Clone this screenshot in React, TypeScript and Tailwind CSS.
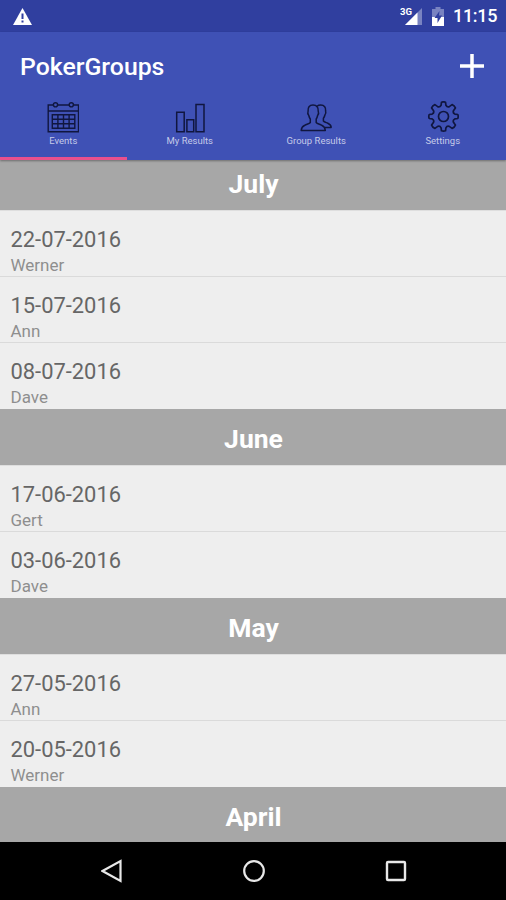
import type { ReactNode } from "react";

interface PokerEvent {
  date: string;
  host: string;
}

interface Month {
  name: string;
  events: PokerEvent[];
}

const months: Month[] = [
  {
    name: "July",
    events: [
      { date: "22-07-2016", host: "Werner" },
      { date: "15-07-2016", host: "Ann" },
      { date: "08-07-2016", host: "Dave" },
    ],
  },
  {
    name: "June",
    events: [
      { date: "17-06-2016", host: "Gert" },
      { date: "03-06-2016", host: "Dave" },
    ],
  },
  {
    name: "May",
    events: [
      { date: "27-05-2016", host: "Ann" },
      { date: "20-05-2016", host: "Werner" },
    ],
  },
  { name: "April", events: [] },
];

const CalendarIcon = () => (
  <svg className="h-8 w-8" viewBox="0 0 32 32" fill="none" stroke="#10163f" strokeWidth="1.4">
    <path d="M6.5 4H1.2V30.8H31.5V4H26.5M10.5 4H22M1.2 10H31.5" />
    <circle cx="8.5" cy="3.8" r="2.1" />
    <circle cx="24.3" cy="3.8" r="2.1" />
    <path d="M5.3 13.8H27.8V27.3H5.3ZM5.3 18.3H27.8M5.3 22.8H27.8M10.9 13.8V27.3M16.5 13.8V27.3M22.1 13.8V27.3" />
  </svg>
);

const BarsIcon = () => (
  <svg className="h-8 w-8" viewBox="0 0 32 32" fill="none" stroke="#10163f" strokeWidth="1.5">
    <path d="M2.7 11.2H10.2V30.8H2.7ZM12.9 18.7H19.7V30.8H12.9ZM22 3.4H30V30.8H22Z" />
  </svg>
);

const GroupIcon = () => (
  <svg className="h-8 w-8" viewBox="0 0 32 32" fill="none" stroke="#10163f" strokeWidth="1.5" strokeLinejoin="round">
    <path d="M13 4C9.2 4 7.8 6.5 8.1 10C7.6 11.5 7.8 13.5 8.8 14.5C9.1 16 9.6 17.2 10.3 18V21.5C9.5 22.6 7 23.2 4.8 24.3C2.5 25.3 1.4 26.6 1.2 29.5H25.3C25.1 26.6 24 25.3 21.7 24.3C19.5 23.2 17 22.6 16.2 21.5V18C16.9 17.2 17.3 16 17.6 14.5C18.5 13.5 18.8 11.5 18.2 10C18.5 6.5 16.8 4 13 4Z" />
    <path d="M17 5.3C18 4.4 19 4 20.7 4C24.4 4 26 6.5 25.6 10C26.1 11.5 25.8 13 24.9 14C24.6 15.5 24.1 16.4 23.4 17.2V20C24.2 21 26 21.4 27.8 22.2C30 23.2 31.1 24.4 31.2 26.4H25" />
  </svg>
);

const GearIcon = () => (
  <svg className="h-8 w-8" viewBox="0 0 32 32" fill="none" stroke="#10163f" strokeWidth="1.7" strokeLinejoin="round">
    <path d="M14.5 1.2Q16.5 .4 18.5 1.2L18.9 4.2Q20.4 6.7 22.6 5.4L25.1 3.6Q27.4 4.4 28.4 6.9L26.6 9.4Q25.5 12 27.8 13.1L30.8 13.5Q31.6 15.5 30.8 17.5L27.8 17.9Q25.5 19 26.6 21.6L28.4 24.1Q27.4 26.6 25.1 27.4L22.6 25.6Q20.2 24.5 18.9 26.8L18.5 29.8Q16.5 30.6 14.5 29.8L14.1 26.8Q12.8 24.5 10.4 25.6L7.9 27.4Q5.6 26.6 4.6 24.1L6.4 21.6Q7.5 19 5.2 17.9L2.2 17.5Q1.4 15.5 2.2 13.5L5.2 13.1Q7.5 12 6.4 9.4L4.6 6.9Q5.6 4.4 7.9 3.6L10.4 5.4Q12.6 6.7 14.1 4.2Z" />
    <circle cx="16.5" cy="15.5" r="5" />
  </svg>
);

const StatusBar = () => (
  <div className="flex h-8 shrink-0 items-center bg-[#303f9f] pl-[13px] pr-[9px] text-white">
    <svg className="h-[17px] w-[19px]" viewBox="0 0 19 17">
      <path d="M9.5 0L19 17H0Z" fill="#fff" />
      <path d="M9.5 5.5V11M9.5 12.6V14.6" stroke="#303f9f" strokeWidth="2" />
    </svg>
    <div className="ml-auto flex items-center">
      <svg className="h-5 w-[23px]" viewBox="0 0 23 20">
        <path d="M22 2V19H5Z" fill="#7983c1" />
        <path d="M17.5 6.5V19H5Z" fill="#fff" />
        <text x="0" y="9" fill="#fff" fontSize="9.5" fontWeight="700" fontFamily="Roboto, sans-serif" stroke="#303f9f" strokeWidth="2" paintOrder="stroke" textLength="12" lengthAdjust="spacingAndGlyphs">3G</text>
      </svg>
      <svg className="ml-[9px] h-[19px] w-3" viewBox="0 0 12 19">
        <path d="M0 2H3.5V0H8.5V2H12V10H0Z" fill="#7983c1" />
        <path d="M0 10H12V19H0Z" fill="#fff" />
        <path d="M7.5 4L2.5 11H5.5V16L10 8.5H7Z" fill="#303f9f" />
      </svg>
      <span className="ml-[9px] w-11 text-[18px] font-medium leading-8 tracking-[-0.3px]">11:15</span>
    </div>
  </div>
);

const Tab = ({ label, icon, active }: { label: string; icon: ReactNode; active?: boolean }) => (
  <button className={`flex h-[59px] flex-1 flex-col items-center border-b-[3px] ${active ? "border-[#e9508d]" : "border-transparent"}`}>
    {icon}
    <span className="mt-[2px] text-[9.5px] leading-3 text-[#c5cae9]">{label}</span>
  </button>
);

const MonthSection = ({ month }: { month: Month }) => (
  <section>
    <h2 className="flex h-14 items-center justify-center bg-[#a7a7a7] pl-px pt-[3px] text-[26.5px] font-bold text-white">{month.name}</h2>
    <ul className="border-t border-[#dedede]">
      {month.events.map((event, i) => (
        <li
          key={event.date}
          className={`h-[66px] pl-[10.5px] pt-4 ${i < month.events.length - 1 ? "border-b border-[#dadada]" : ""}`}
        >
          <div className="text-[21.9px] leading-[26px] text-[#666666]">{event.date}</div>
          <div className="text-[17px] leading-[25px] text-[#8e8e8e]">{event.host}</div>
        </li>
      ))}
    </ul>
  </section>
);

export default function App() {
  return (
    <div className="flex h-[900px] w-[506px] flex-col overflow-hidden bg-[#eeeeee] font-['Roboto',sans-serif]">
      <StatusBar />
      <header className="z-10 shrink-0 bg-[#3f51b5] shadow-[0_1px_2px_rgba(0,0,0,0.35)]">
        <div className="flex h-[69px] items-center justify-between pl-5 pr-[22px]">
          <h1 className="pt-px text-[24.8px] font-medium text-white">PokerGroups</h1>
          <svg className="mb-[2px] h-6 w-6" viewBox="0 0 24 24">
            <path d="M12 0V24M0 12H24" stroke="#fff" strokeWidth="3.5" />
          </svg>
        </div>
        <nav className="flex">
          <Tab label="Events" icon={<CalendarIcon />} active />
          <Tab label="My Results" icon={<BarsIcon />} />
          <Tab label="Group Results" icon={<GroupIcon />} />
          <Tab label="Settings" icon={<GearIcon />} />
        </nav>
      </header>
      <main className="min-h-0 flex-1 overflow-hidden">
        {/* list is scrolled a few pixels under the tabs */}
        <div className="-mt-[6px]">
          {months.map((month) => (
            <MonthSection key={month.name} month={month} />
          ))}
        </div>
      </main>
      <nav className="flex h-[58px] shrink-0 items-center justify-center gap-[120px] bg-black pl-px">
        <svg className="h-6 w-[22px]" viewBox="0 0 22 24" fill="none" stroke="#e8e8e8" strokeWidth="2.2">
          <path d="M19.5 2V22L1.5 12Z" />
        </svg>
        <svg className="h-6 w-[22px]" viewBox="0 0 22 24" fill="none" stroke="#e8e8e8" strokeWidth="2.2">
          <circle cx="11" cy="12" r="9.8" />
        </svg>
        <svg className="h-6 w-[22px]" viewBox="0 0 22 24" fill="none" stroke="#e8e8e8" strokeWidth="2.4">
          <rect x="2" y="3" width="18" height="18" rx="1" />
        </svg>
      </nav>
    </div>
  );
}
